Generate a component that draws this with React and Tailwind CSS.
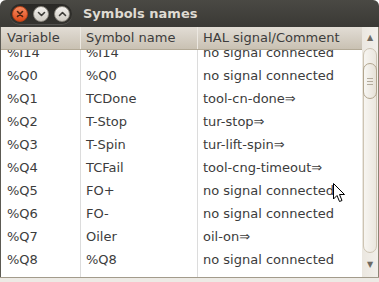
const ROWS = [
  ['%I14', '%I14', 'no signal connected'],
  ['%Q0', '%Q0', 'no signal connected'],
  ['%Q1', 'TCDone', 'tool-cn-done⇒'],
  ['%Q2', 'T-Stop', 'tur-stop⇒'],
  ['%Q3', 'T-Spin', 'tur-lift-spin⇒'],
  ['%Q4', 'TCFail', 'tool-cng-timeout⇒'],
  ['%Q5', 'FO+', 'no signal connected'],
  ['%Q6', 'FO-', 'no signal connected'],
  ['%Q7', 'Oiler', 'oil-on⇒'],
  ['%Q8', '%Q8', 'no signal connected'],
  ['', '', ''],
]

function TitleButtons() {
  return (
    <div className="h-[20px] w-[62px] rounded-full bg-gradient-to-b from-[#2a2926] to-[#34332f] flex items-center justify-between px-[2px] shadow-[0_1px_0_rgba(255,255,255,0.12)]">
      <div className="w-[16px] h-[16px] rounded-full bg-gradient-to-b from-[#f58a5e] to-[#dd4814] border border-[#b8431a] flex items-center justify-center">
        <svg width="8" height="8" viewBox="0 0 8 8"><path d="M1.5 1.5 L6.5 6.5 M6.5 1.5 L1.5 6.5" stroke="#4a2210" strokeWidth="1.6" strokeLinecap="round" /></svg>
      </div>
      <div className="w-[16px] h-[16px] rounded-full bg-gradient-to-b from-[#f4f2ee] to-[#cfcbc3] border border-[#8e8a82] flex items-center justify-center">
        <svg width="9" height="8" viewBox="0 0 9 8"><path d="M1.5 2.5 L4.5 5.5 L7.5 2.5" fill="none" stroke="#3c3b37" strokeWidth="1.6" strokeLinecap="round" strokeLinejoin="round" /></svg>
      </div>
      <div className="w-[16px] h-[16px] rounded-full bg-gradient-to-b from-[#f4f2ee] to-[#cfcbc3] border border-[#8e8a82] flex items-center justify-center">
        <svg width="9" height="8" viewBox="0 0 9 8"><path d="M1.5 5.5 L4.5 2.5 L7.5 5.5" fill="none" stroke="#3c3b37" strokeWidth="1.6" strokeLinecap="round" strokeLinejoin="round" /></svg>
      </div>
    </div>
  )
}

function Scrollbar() {
  return (
    <div className="w-[16px] flex flex-col items-center bg-gradient-to-r from-[#ebe7e0] to-[#f2efea]">
      <div className="h-[21px] flex items-center justify-center text-[8px] text-[#6d6a63]">▲</div>
      <div className="flex-1 w-[14px] rounded-[7px] border border-[#cdc4b3] bg-gradient-to-r from-[#f7f5f1] to-[#ebe7df] pt-[14px]">
        <div className="h-[36px] -mx-px rounded-[7px] border border-[#b1a58e] bg-gradient-to-r from-[#f8f7f4] to-[#e6e1d7] flex flex-col items-center justify-center gap-[2px]">
          <div className="w-[6px] h-px bg-[#b3ab9c]" />
          <div className="w-[6px] h-px bg-[#b3ab9c]" />
          <div className="w-[6px] h-px bg-[#b3ab9c]" />
        </div>
      </div>
      <div className="h-[24px] flex items-center justify-center text-[8px] text-[#6d6a63]">▼</div>
    </div>
  )
}

export default function App() {
  return (
    <div className="w-[379px] h-[282px] bg-white overflow-hidden relative font-['DejaVu_Sans',sans-serif] text-[13px] text-[#3c3c3c]">
      <div className="h-full flex flex-col rounded-t-[6px] overflow-hidden bg-[#edeae5]">
        <div className="h-[27px] shrink-0 bg-gradient-to-b from-[#4a4944] to-[#3a3935] flex items-center pl-[10px]">
          <TitleButtons />
          <span className="ml-[11px] font-bold text-[#dfdbd2] leading-none">Symbols names</span>
        </div>
        <div className="flex-1 flex min-h-0 border-l border-[#5c5a53] border-r border-r-[#8c8474]">
          <div className="w-[361px] flex flex-col min-h-0">
            <div className="h-[23px] shrink-0 flex bg-gradient-to-b from-[#e2ddd5] to-[#c9c1b3] border-b border-[#b2a996]">
              <div className="w-[80px] pl-[6px] flex items-center border-r border-[#ece8e1]">Variable</div>
              <div className="w-[117px] pl-[5px] flex items-center border-r border-[#ece8e1]">Symbol name</div>
              <div className="flex-1 pl-[5px] flex items-center">HAL signal/Comment</div>
            </div>
            <div className="flex-1 min-h-0 overflow-hidden bg-white">
              <div className="-mt-[9px]">
                {ROWS.map((r, i) => (
                  <div key={i} className="h-[23px] flex">
                    <div className="w-[80px] pl-[6px] flex items-center border-r border-[#dcdcdc]">{r[0]}</div>
                    <div className="w-[117px] pl-[5px] flex items-center border-r border-[#dcdcdc]">{r[1]}</div>
                    <div className="flex-1 pl-[5px] flex items-center whitespace-nowrap">{r[2]}</div>
                  </div>
                ))}
              </div>
            </div>
          </div>
          <Scrollbar />
        </div>
        <div className="h-[5px] shrink-0 border-t border-[#a39b8b] bg-[#edeae5]" />
      </div>
      <svg className="absolute left-[333px] top-[183px]" width="13" height="20" viewBox="0 0 13 20">
        <path d="M0.5 0.5 L0.5 16 L4 12.5 L6.5 18.5 L9 17.5 L6.5 11.5 L11.5 11.5 Z" fill="#fff" stroke="#000" strokeWidth="1" strokeLinejoin="round" />
      </svg>
    </div>
  )
}
